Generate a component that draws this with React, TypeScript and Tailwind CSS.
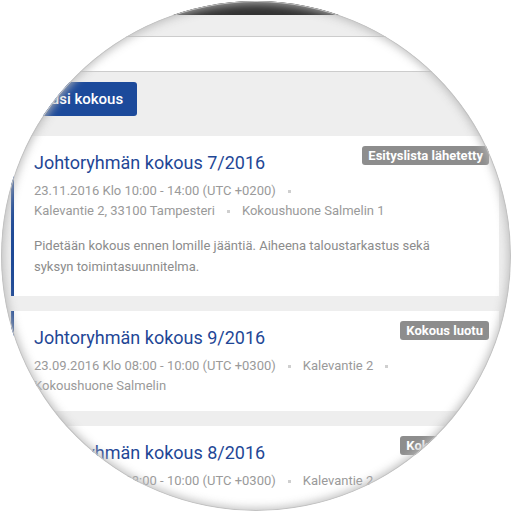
import React from "react";

type Meeting = {
  title: string;
  badge: string;
  meta: string[];
  desc?: string[];
  accent: boolean;
};

const meetings: Meeting[] = [
  {
    title: "Johtoryhmän kokous 7/2016",
    badge: "Esityslista lähetetty",
    meta: [
      "23.11.2016 Klo 10:00 - 14:00 (UTC +0200)",
      "Kalevantie 2, 33100 Tampesteri",
      "Kokoushuone Salmelin 1",
    ],
    desc: [
      "Pidetään kokous ennen lomille jääntiä. Aiheena taloustarkastus sekä syksyn toimintasuunnitelma.",
    ],
    accent: true,
  },
  {
    title: "Johtoryhmän kokous 9/2016",
    badge: "Kokous luotu",
    meta: [
      "23.09.2016 Klo 08:00 - 10:00 (UTC +0300)",
      "Kalevantie 2",
      "Kokoushuone Salmelin",
    ],
    accent: true,
  },
  {
    title: "Johtoryhmän kokous 8/2016",
    badge: "Kokous luotu",
    meta: [
      "23.09.2016 Klo 08:00 - 10:00 (UTC +0300)",
      "Kalevantie 2",
      "Kokoushuone Salmelin",
    ],
    accent: false,
  },
];

function Card({ m }: { m: Meeting }) {
  return (
    <div
      className={
        "relative bg-white pl-[20px] pr-[10px] pt-[15px] pb-[15px] " +
        (m.accent ? "border-l-[3px] border-[#1c4896]" : "border-l-[3px] border-white")
      }
    >
      <div className="text-[18px] leading-[24px] text-[#1f4796]">{m.title}</div>
      <div className="absolute top-[10px] right-[10px] rounded-[3px] bg-[#8d8d8d] px-[6px] text-[13px] font-bold leading-[19px] text-white">
        {m.badge}
      </div>
      <div className="mt-[6px] flex w-[430px] flex-wrap text-[13px] leading-[20px] text-[#9a9a9a]">
        {m.meta.map((t, i) => (
          <span key={i} className="flex items-center whitespace-nowrap">
            {t}
            {i < m.meta.length - 1 && (
              <span className="mx-[12px] inline-block h-[3px] w-[3px] bg-[#cfcfcf]" />
            )}
          </span>
        ))}
      </div>
      {m.desc && (
        <div className="mt-[14px] mb-[4px] w-[430px] text-[13px] leading-[21px] text-[#8c8c8c]">
          {m.desc[0]}
        </div>
      )}
    </div>
  );
}

export default function App() {
  return (
    <div className="flex h-[512px] w-[512px] items-center justify-center bg-white font-['Roboto',sans-serif]">
      <div className="relative h-[510px] w-[510px] overflow-hidden rounded-full bg-[#eeeeee]">
        <div className="-ml-px -mt-px w-[512px]">
          <div className="h-[15px] bg-[#333333]" />
          <div className="pl-[11px] pr-[13px] pt-[21px]">
            <div className="h-[36px] border border-[#cccccc] bg-white" />
            <button className="ml-[16px] mt-[10px] flex h-[34px] items-center rounded-[3px] bg-[#1c4a9b] px-[14px] text-[15px] font-medium text-white">
              Uusi kokous
            </button>
            <div className="mt-[20px] flex flex-col gap-[15px]">
              {meetings.map((m, i) => (
                <Card key={i} m={m} />
              ))}
            </div>
          </div>
        </div>
        <div className="pointer-events-none absolute inset-0 rounded-full shadow-[inset_0_0_0_1px_#c2c2c2,inset_0_0_8px_3px_rgba(185,185,185,0.85)]" />
      </div>
    </div>
  );
}
